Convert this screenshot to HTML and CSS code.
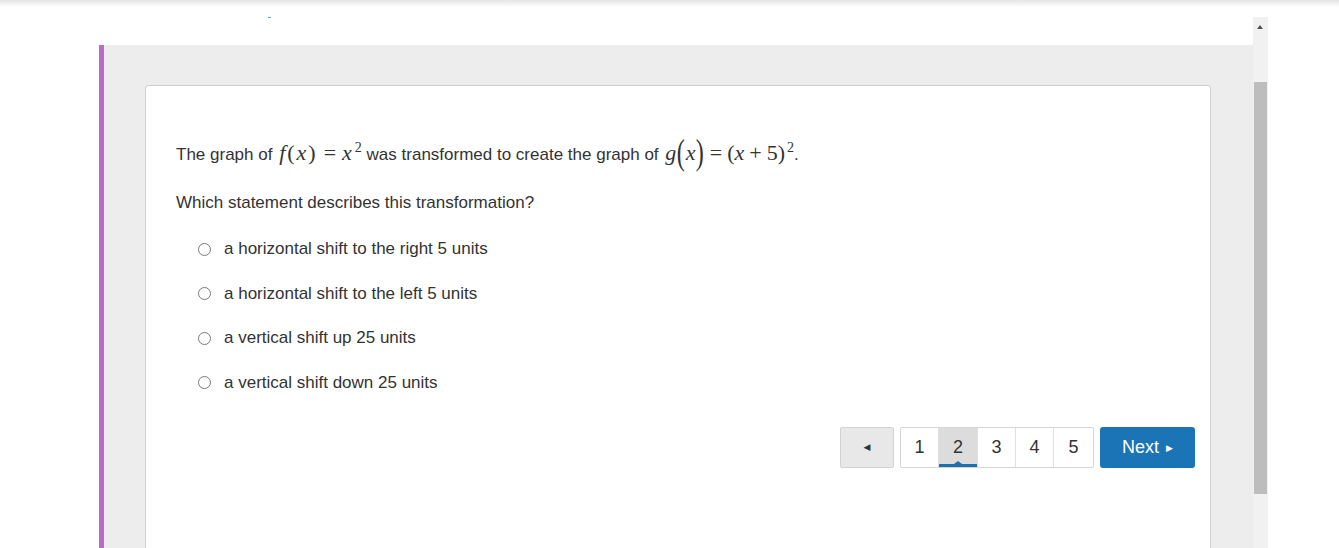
FILE: index.html
```html
<!DOCTYPE html>
<html>
<head>
<meta charset="utf-8">
<link rel="stylesheet" href="styles.css">
</head>
<body>
<div class="topshade"></div>
<div class="page">
  <div class="main">
    <div class="header"><span class="dash"></span></div>
    <div class="panel">
      <div class="card">
        <p class="stem">The graph of <span class="math first"><i>f</i><span class="p">(</span><i>x</i><span class="p">)</span><span class="op">=</span><i>x</i><sup>2</sup></span> was transformed to create the graph of <span class="math"><i>g</i><span class="bp">(</span><i>x</i><span class="bp">)</span><span class="op">=</span><span class="p">(</span><i>x</i><span class="op">+</span>5<span class="p">)</span><sup>2</sup></span>.</p>
        <p class="question">Which statement describes this transformation?</p>
        <ul class="options">
          <li><span class="radio"></span>a horizontal shift to the right 5 units</li>
          <li><span class="radio"></span>a horizontal shift to the left 5 units</li>
          <li><span class="radio"></span>a vertical shift up 25 units</li>
          <li><span class="radio"></span>a vertical shift down 25 units</li>
        </ul>
        <div class="pager">
          <button class="prev">&#9664;</button>
          <div class="pages">
            <span class="pg">1</span>
            <span class="pg active">2</span>
            <span class="pg">3</span>
            <span class="pg">4</span>
            <span class="pg last">5</span>
          </div>
          <button class="next">Next <span class="tri">&#9654;</span></button>
        </div>
      </div>
    </div>
  </div>
  <div class="scrollbar">
    <div class="arrow"></div>
    <div class="thumb"></div>
  </div>
</div>
</body>
</html>
```

FILE: styles.css
```css
* { box-sizing: border-box; }
html, body {
  margin: 0;
  padding: 0;
  background: #fff;
  height: 548px;
  overflow: hidden;
  font-family: Arial, "Liberation Sans", Helvetica, sans-serif;
  color: #333;
}
.topshade {
  position: absolute;
  left: 0; top: 0; right: 0;
  height: 7px;
  background: linear-gradient(#e4e4e4, rgba(255,255,255,0));
  z-index: 2;
}
.page {
  display: flex;
  padding-left: 99px;
  height: 548px;
}
.main {
  width: 1154px;
  display: flex;
  flex-direction: column;
}
.header {
  height: 45px;
  flex: none;
  position: relative;
}
.dash {
  position: absolute;
  left: 169px;
  top: 17px;
  width: 3px;
  height: 1px;
  background: #5aa6d6;
}
.panel {
  background: #ededed;
  border-left: 5px solid #b86dc7;
  padding: 40px 42px 0 41px;
  height: 503px;
  overflow: hidden;
}
.card {
  background: #fff;
  border: 1px solid #cfcfcf;
  border-radius: 3px;
  height: 480px;
  padding: 54px 15px 0 30px;
}
.stem {
  margin: 0;
  font-size: 17px;
  line-height: 26px;
}
.math {
  font-family: "Liberation Serif", "Times New Roman", serif;
  font-size: 22px;
  white-space: nowrap;
  margin-left: 2px;
}
.math i { font-style: italic; }
.math sup {
  font-size: 14px;
  vertical-align: 8px;
  line-height: 0;
  margin-left: 2px;
}
.math .p {
  font-size: 22px;
}
.math .bp {
  display: inline-block;
  font-size: 22px;
  transform: scale(1.1, 1.6);
  margin: 0 1px;
}
.math .op {
  margin: 0 5px;
}
.math.first .p {
  margin: 0 2px;
}
.math.first .op {
  margin: 0 6px;
}
.math.first sup {
  margin-left: 3px;
}
.question {
  margin: 25px 0 0;
  font-size: 17px;
  line-height: 20px;
}
.options {
  list-style: none;
  margin: 26px 0 0;
  padding: 0 0 0 22px;
}
.options li {
  display: flex;
  align-items: center;
  font-size: 17px;
  height: 20px;
  margin-bottom: 24.5px;
}
.radio {
  width: 13px;
  height: 13px;
  border: 1px solid #777;
  border-radius: 50%;
  margin-right: 13px;
  flex: none;
}
.pager {
  display: flex;
  justify-content: flex-end;
  margin-top: 34px;
  height: 41px;
}
.prev {
  width: 54px;
  height: 41px;
  background: #e8e8e8;
  border: 1px solid #d2d2d2;
  border-radius: 2px;
  color: #333;
  font-size: 9px;
  padding: 0;
  font-family: "DejaVu Sans", sans-serif;
}
.pages {
  display: flex;
  margin-left: 6px;
  border: 1px solid #d6d6d6;
  border-radius: 2px;
  height: 41px;
}
.pg {
  width: 38px;
  display: flex;
  align-items: center;
  justify-content: center;
  font-size: 18px;
  color: #333;
  border-right: 1px solid #e0e0e0;
  position: relative;
}
.pg.active { width: 39px; }
.pg.last { border-right: none; width: 39px; }
.pg.active {
  background: #dcdcdc;
}
.pg.active::after {
  content: "";
  position: absolute;
  left: 0; right: 0; bottom: 0;
  height: 3px;
  background: #1d70ad;
}
.pg.active::before {
  content: "";
  position: absolute;
  left: 50%;
  bottom: 3px;
  margin-left: -4px;
  border-left: 4px solid transparent;
  border-right: 4px solid transparent;
  border-bottom: 3px solid #1d70ad;
}
.next {
  margin-left: 6px;
  width: 95px;
  height: 41px;
  background: #1b74b6;
  border: none;
  border-radius: 3px;
  color: #fff;
  font-size: 18px;
  font-family: Arial, "Liberation Sans", sans-serif;
  padding: 0;
}
.next .tri {
  font-size: 9px;
  vertical-align: 2px;
  margin-left: 2px;
  font-family: "DejaVu Sans", sans-serif;
}
.scrollbar {
  width: 15px;
  margin-top: 17px;
  height: 531px;
  background: #f1f1f1;
  position: relative;
}
.arrow {
  position: absolute;
  left: 4px;
  top: 8px;
  border-left: 3.5px solid transparent;
  border-right: 3.5px solid transparent;
  border-bottom: 4px solid #505050;
}
.thumb {
  position: absolute;
  left: 1px;
  top: 65px;
  width: 13px;
  height: 412px;
  background: #bdbdbd;
}
```
